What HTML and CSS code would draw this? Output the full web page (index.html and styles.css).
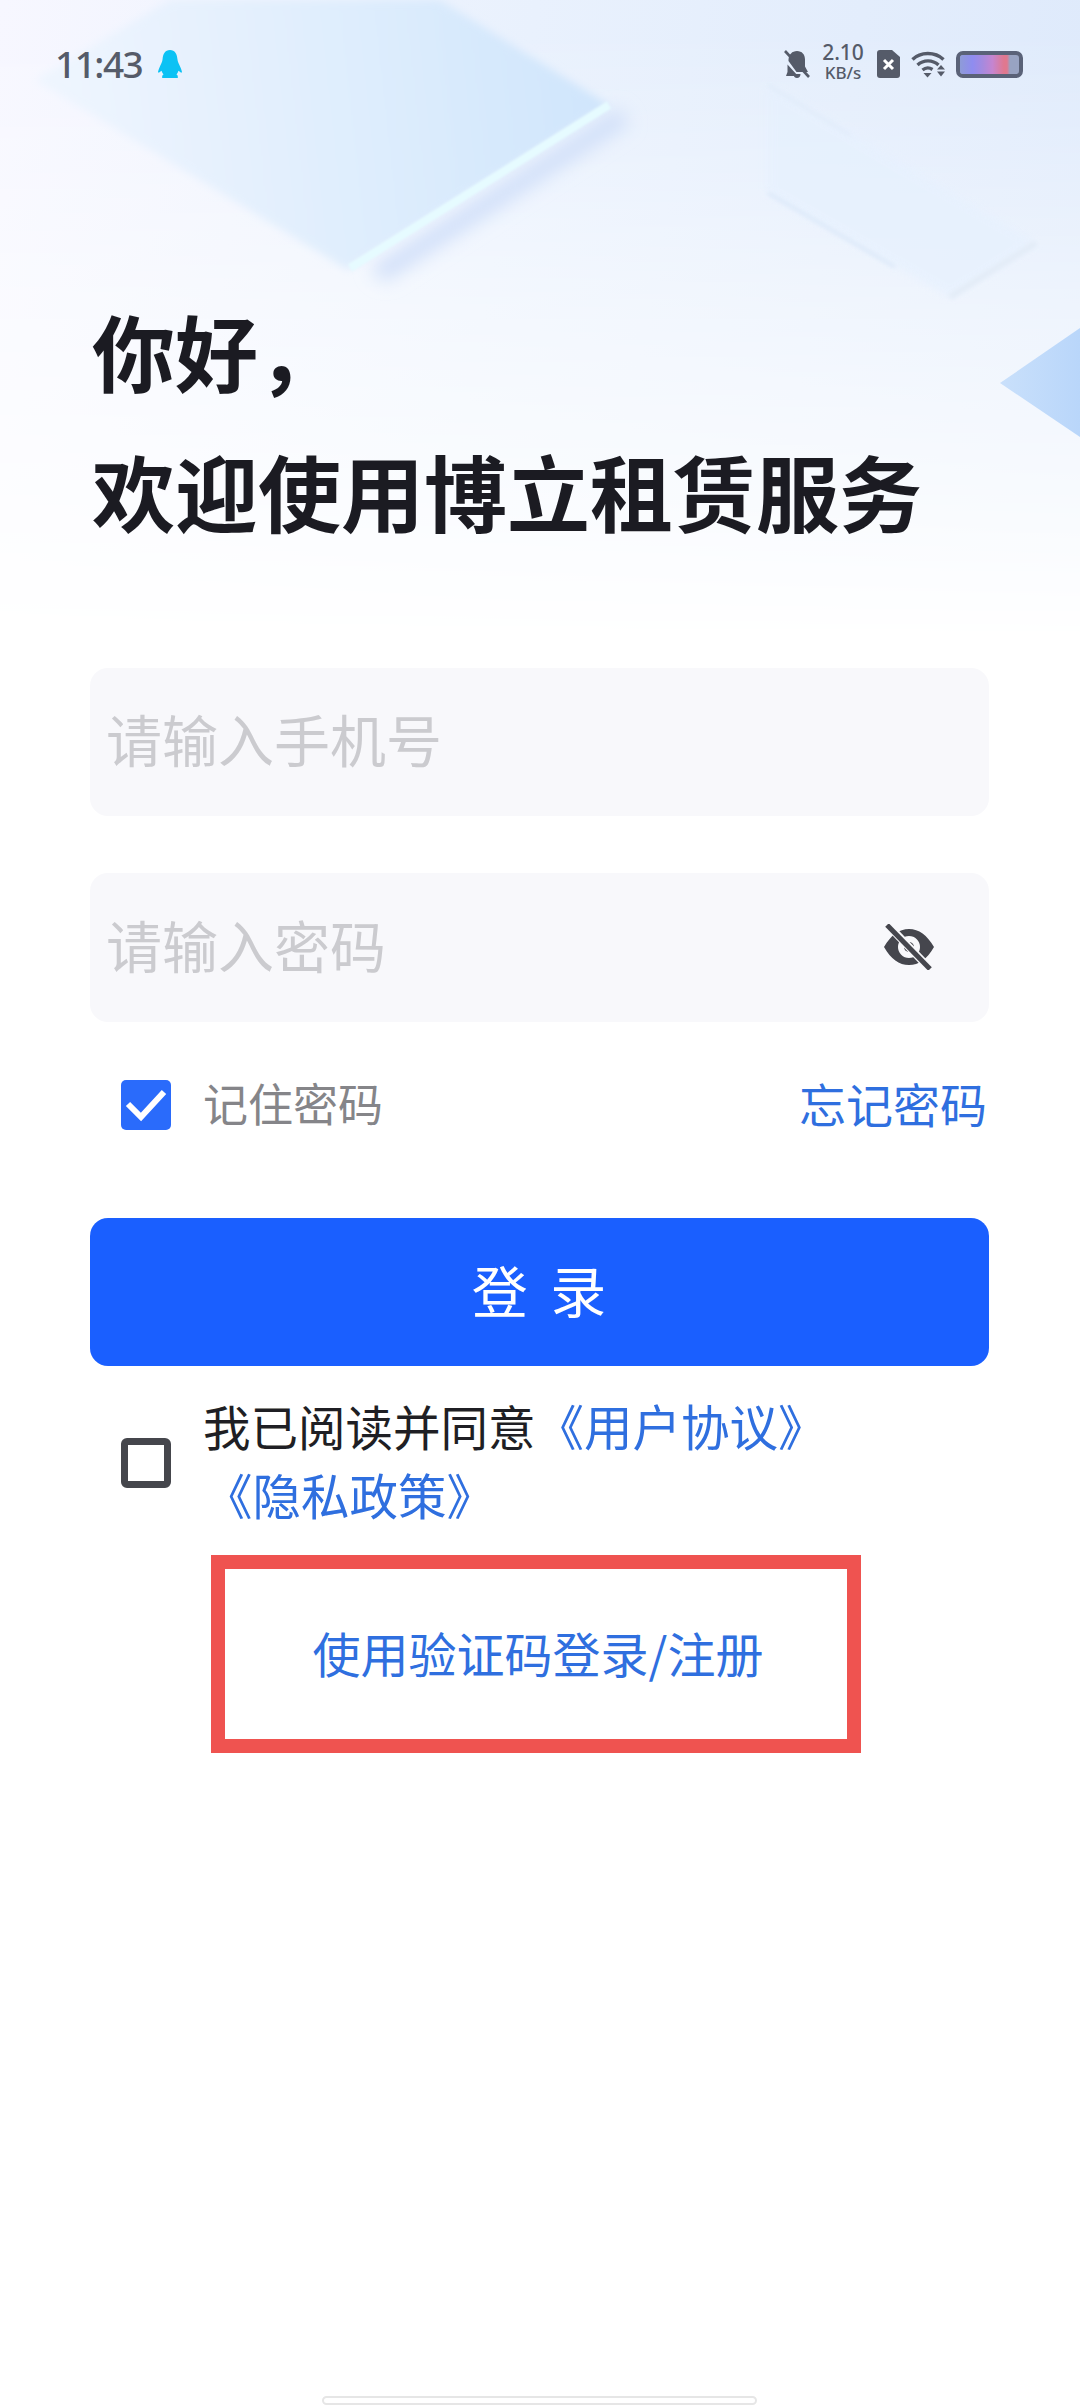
FILE: index.html
```html
<!DOCTYPE html>
<html lang="zh-CN">
<head>
<meta charset="utf-8">
<title>登录</title>
<link rel="stylesheet" href="styles.css">
</head>
<body>
<div class="app">
  <div class="backdrop">
    <div class="wash"></div>
    <svg class="shapes" viewBox="0 0 1080 640" width="1080" height="640">
      <defs>
        <linearGradient id="p1" gradientUnits="userSpaceOnUse" x1="60" y1="120" x2="609" y2="60">
          <stop offset="0" stop-color="#eef5fe"/>
          <stop offset="0.55" stop-color="#deedfd"/>
          <stop offset="1" stop-color="#cfe5fc"/>
        </linearGradient>
        <linearGradient id="p3" x1="0" y1="0" x2="1" y2="0">
          <stop offset="0" stop-color="#c9e0fb"/>
          <stop offset="1" stop-color="#b9d6fa"/>
        </linearGradient>
        <filter id="b1" x="-20%" y="-20%" width="140%" height="140%"><feGaussianBlur stdDeviation="1"/></filter>
        <filter id="b2" x="-20%" y="-20%" width="140%" height="140%"><feGaussianBlur stdDeviation="2"/></filter>
        <filter id="b3" x="-20%" y="-20%" width="140%" height="140%"><feGaussianBlur stdDeviation="4"/></filter>
        <filter id="b8" x="-30%" y="-30%" width="160%" height="160%"><feGaussianBlur stdDeviation="9"/></filter>
      </defs>
      <path d="M370 268 L618 108 L630 124 L385 282 Z" fill="#d2e0f9" filter="url(#b8)"/>
      <path d="M35 80 L348 270 L609 105 L440 0 L170 0 Z" fill="url(#p1)" filter="url(#b3)"/>
      <path d="M350 268 L609 105" stroke="#e6fbff" stroke-width="8" filter="url(#b1)"/>
      <path d="M768 85 L1036 243 L950 297 L768 193 Z" fill="#e6f1fe" opacity="0.7" filter="url(#b3)"/>
      <path d="M768 85 L850 135" stroke="#dde9f8" stroke-width="2" filter="url(#b2)"/>
      <path d="M768 193 L895 267" stroke="#d6e5f7" stroke-width="2.500" filter="url(#b2)"/>
      <path d="M950 297 L1036 243" stroke="#e3ecf7" stroke-width="6" filter="url(#b2)"/>
      <path d="M1000 383 L1080 328 L1080 437 Z" fill="url(#p3)"/>
    </svg>
  </div>

  <header class="status">
    <div class="status-left">
      <span class="time">11:43</span>
      <svg class="qq" viewBox="0 0 24 28" width="24" height="28"><path fill="#0cc2f4" d="M12 0C7 0 5 4 4.600 9 4.400 12 3 14 1.500 17.500 .600 19.600 0 21.500 0 22.500c1 .3 2.500-1 3.500-1.800C4 22.300 4.600 23.500 5.500 24.500 4.500 25 4 25.700 4.200 28h15.600c.2-2.300-.3-3-1.300-3.500.9-1 1.500-2.200 2-3.800 1 .8 2.500 2.100 3.500 1.800 0-1-.6-2.900-1.500-5C21 14 19.600 12 19.400 9 19 4 17 0 12 0z"/></svg>
    </div>
    <div class="status-right">
      <svg class="ico bell" viewBox="0 0 26 28" width="26" height="28">
        <path fill="#555b69" d="M13 1c5 0 8 3.500 8 8.500v7l3 5.500H12.500L4.500 11V9.500C5 4.500 8 1 13 1zM3.500 14.500 14 26H2l1.500-4zM9.500 24h7c0 2.500-1.500 4-3.500 4s-3.500-1.500-3.500-4z"/>
        <path stroke="#555b69" stroke-width="2.600" d="M1 1 25 27"/>
      </svg>
      <div class="speed"><span class="speed-num">2.10</span><span class="speed-unit">KB/s</span></div>
      <svg class="ico sim" viewBox="0 0 23 28" width="23" height="28">
        <path fill="#555b69" d="M3 0H15L23 7V25a3 3 0 0 1-3 3H3a3 3 0 0 1-3-3V3a3 3 0 0 1 3-3z"/>
        <path stroke="#fff" stroke-width="3" d="M7 10 16 19M16 10 7 19"/>
      </svg>
      <svg class="ico wifi" viewBox="0 0 35 28" width="35" height="28">
        <g fill="none" stroke="#555b69" stroke-width="3.400">
          <path d="M1.500 9.500C9.500 1.500 24 1.500 32.500 9.500"/>
          <path d="M6.500 15C12.500 9.500 21.500 9.500 27.500 15"/>
          <path d="M11.500 20C14.500 17.500 18.500 17.500 21.500 19.500"/>
        </g>
        <path fill="#555b69" d="M12.500 23h8L16.500 27.500zM26 19.500h8L30 15zM26 21.500h8L30 26.500z"/>
      </svg>
      <div class="battery"><span class="battery-fill"></span></div>
    </div>
  </header>

  <h1 class="greeting">你好，<br>欢迎使用博立租赁服务</h1>

  <main class="form">
    <div class="field"><span class="placeholder">请输入手机号</span></div>
    <div class="field field-second">
      <span class="placeholder">请输入密码</span>
      <svg class="eye" viewBox="0 0 52 46" width="52" height="46">
        <path fill="#45464d" fill-rule="evenodd" d="M1 23C8 11 16 5 26 5s18 6 25 18c-7 12-15 18-25 18S8 35 1 23zM26 12a11 11 0 1 0 0 22 11 11 0 0 0 0-22z"/>
        <circle cx="26" cy="23" r="5" fill="#45464d"/>
        <path stroke="#f8f8fb" stroke-width="8" d="M4 0 48 46"/>
        <path stroke="#45464d" stroke-width="5" d="M4 1 47 45"/>
      </svg>
    </div>

    <div class="remember">
      <div class="remember-left">
        <span class="check check-on">
          <svg viewBox="0 0 50 50" width="50" height="50"><path fill="none" stroke="#fff" stroke-width="6" d="M7 24 20 37 43 12"/></svg>
        </span>
        <span class="remember-label">记住密码</span>
      </div>
      <a class="forgot">忘记密码</a>
    </div>

    <button class="login">登 录</button>

    <div class="terms">
      <span class="check check-off"></span>
      <p class="terms-text">我已阅读并同意<a class="link link-big">《用户协议》</a><br><a class="link link-big link-wrap">《隐私政策》</a></p>
    </div>

    <div class="code-login"><a class="link code-text">使用验证码登录/注册</a></div>
  </main>

  <div class="home-bar"></div>
</div>
</body>
</html>
```
FILE: styles.css
```css
* { box-sizing: border-box; }
html, body { margin: 0; padding: 0; background: #fff; }
body { font-family: "Noto Sans CJK SC", "Noto Sans", sans-serif; }

.app {
  position: relative;
  width: 1080px;
  height: 2408px;
  overflow: hidden;
  display: flex;
  flex-direction: column;
  background: #fff;
}

.backdrop { position: absolute; left: 0; top: 0; width: 1080px; height: 640px; }
.wash {
  position: absolute;
  inset: 0;
  background: linear-gradient(100deg, #f7f7ff 0%, #e9f1fd 45%, #dde9fb 100%);
  -webkit-mask-image: linear-gradient(to bottom, #000 5%, rgba(0,0,0,.55) 45%, transparent 100%);
  mask-image: linear-gradient(to bottom, #000 5%, rgba(0,0,0,.55) 45%, transparent 100%);
}
.shapes { position: absolute; left: 0; top: 0; }

.status {
  position: relative;
  height: 128px;
  display: flex;
  align-items: center;
  justify-content: space-between;
  padding: 0 57px 0 55px;
  color: #555b69;
}
.status-left { display: flex; align-items: center; gap: 16px; }
.time { font-family: "Noto Sans", sans-serif; font-size: 37px; font-weight: 500; line-height: 44px; letter-spacing: -1.500px; }
.status-right { display: flex; align-items: center; }
.ico { display: block; }
.speed {
  display: flex;
  flex-direction: column;
  align-items: center;
  margin: -4px 14px 0 13px;
  font-family: "Noto Sans", sans-serif;
  font-weight: 500;
  width: 40px;
}
.speed-num { font-size: 21px; line-height: 21px; }
.speed-unit { font-size: 17px; line-height: 19px; }
.wifi { margin: 0 10px 0 11px; }
.battery {
  width: 67px;
  height: 27px;
  border: 4px solid #5a6278;
  border-radius: 7px;
  overflow: hidden;
  background: #98a3c2;
}
.battery-fill {
  display: block;
  width: 50px;
  height: 100%;
  background: linear-gradient(90deg, #8e9bd8 0%, #8f8cf0 25%, #a58adf 45%, #c585d0 65%, #e0788f 88%, #e0788f 94%, #98a3c2 100%);
}

.greeting {
  position: relative;
  margin: 152px 0 0;
  padding-left: 92px;
  font-size: 83px;
  font-weight: 700;
  line-height: 140px;
  color: #1b1b22;
}

.form {
  position: relative;
  display: flex;
  flex-direction: column;
  margin-top: 108px;
  padding: 0 91px 0 90px;
}
.field {
  height: 148px;
  border-radius: 18px;
  background: #f8f8fb;
  display: flex;
  align-items: center;
  justify-content: space-between;
  padding: 0 54px 0 16px;
}
.field-second { margin-top: 57px; height: 149px; }
.placeholder { font-size: 56px; font-weight: 400; color: #cbcbcf; line-height: 70px; padding-bottom: 8px; }
.eye { display: block; margin-top: -2px; }

.remember {
  margin-top: 58px;
  height: 50px;
  display: flex;
  align-items: center;
  justify-content: space-between;
  padding-left: 31px;
}
.remember-left { display: flex; align-items: center; gap: 32px; }
.remember-label { font-size: 45px; color: #858589; line-height: 50px; padding-bottom: 5px; }
.forgot { font-size: 47px; color: #2f6fdf; line-height: 50px; padding: 0 2px 4px 0; }

.check { display: block; width: 50px; height: 50px; flex: none; border-radius: 5px; }
.check svg { display: block; }
.check-on { background: #2a6bfb; }
.check-off { border: 7px solid #45464c; border-radius: 6px; background: #fff; }

.login {
  margin-top: 88px;
  height: 148px;
  border: 0;
  border-radius: 18px;
  background: #1a5fff;
  color: #fff;
  font-family: inherit;
  font-size: 56px;
  font-weight: 400;
  letter-spacing: 5px;
  padding: 0 0 8px 4px;
}

.terms {
  margin-top: 31px;
  display: flex;
  align-items: center;
  gap: 32px;
  padding-left: 31px;
}
.terms-text { margin: -6px 0 0; font-size: 47.500px; line-height: 69px; color: #1f1f24; }
.link { color: #2f6fdf; }
.link-big { font-size: 48.500px; }
.link-wrap { margin-left: 1px; }

.code-login {
  margin: 26px 0 0 121px;
  width: 650px;
  height: 198px;
  border: 14px solid #ef5350;
  display: flex;
  align-items: center;
  justify-content: center;
}
.code-text { font-size: 48px; font-weight: 400; line-height: 60px; padding: 0 0 4px 4px; }

.home-bar {
  position: relative;
  margin: auto 0 3px 322px;
  width: 435px;
  height: 9px;
  border: 2px solid #e6e6e6;
  border-radius: 5px;
  background: #fff;
}
```
